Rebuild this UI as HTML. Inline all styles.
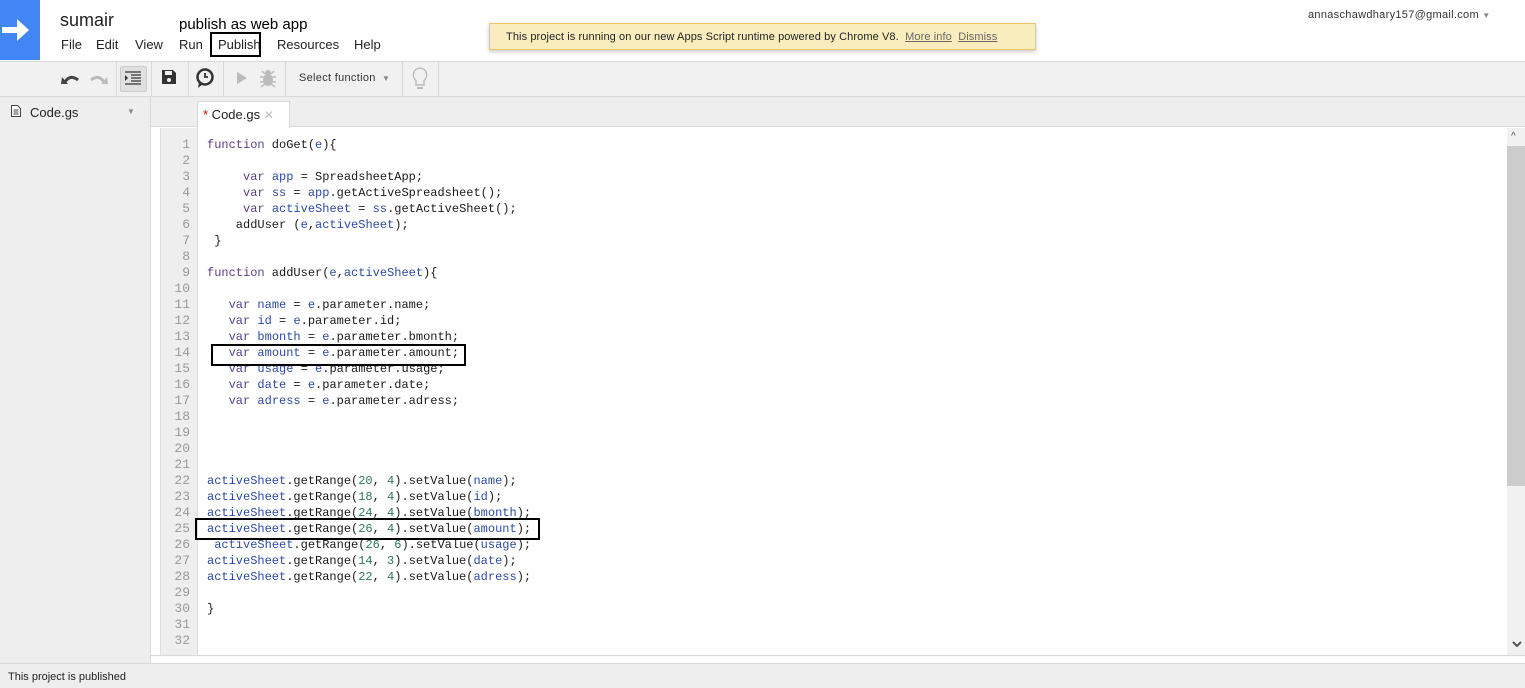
<!DOCTYPE html>
<html><head><meta charset="utf-8">
<style>
*{margin:0;padding:0;box-sizing:border-box}
body{width:1525px;height:688px;overflow:hidden;background:#fff;font-family:"Liberation Sans",Arial,sans-serif;position:relative}
.abs{position:absolute}
#logo{left:0;top:0;width:40px;height:60px;background:#4285f4}
.menu{top:37px;font-size:13px;color:#222}
#toolbar{left:0;top:61px;width:1525px;height:36px;background:#f1f1f1;border-top:1px solid #d9d9d9;border-bottom:1px solid #d9d9d9}
.sep{top:0;width:1px;height:35px;background:#d9d9d9}
#side{left:0;top:97px;width:151px;height:566px;background:#eee;border-right:1px solid #d9d9d9}
#tabbar{left:151px;top:97px;width:1374px;height:30px;background:#eee;border-bottom:1px solid #d9d9d9}
#gutter{left:160px;top:128px;width:38px;height:527px;background:#eee;border-left:1px solid #ddd;border-right:1px solid #ddd}
#code{left:160px;top:137px;font-family:"Liberation Mono",monospace;font-size:12px;line-height:16px;color:#1a1a1a;white-space:pre}
.ln{display:inline-block;width:30px;text-align:right;color:#999;margin-right:17px;font-size:13px;vertical-align:top}
.k{color:#5a3e8a}.v{color:#2d4aa6}.n{color:#2b7a54}
#status{left:0;top:663px;width:1525px;height:25px;background:#eee;border-top:1px solid #d9d9d9;font-size:11px;color:#222;padding:7px 8px}
.box{border:2px solid #000}
</style></head><body>
<div id="logo" class="abs"><svg width="40" height="60"><path d="M2 30h20" stroke="#fff" stroke-width="6"/><path d="M17 19l12 11-12 11z" fill="#fff"/></svg></div>
<div class="abs" style="left:60px;top:10px;font-size:18px;color:#222">sumair</div>
<div class="abs" style="left:179px;top:16px;font-size:15px;color:#000">publish as web app</div>
<div class="abs menu" style="left:61px">File</div>
<div class="abs menu" style="left:96px">Edit</div>
<div class="abs menu" style="left:135px">View</div>
<div class="abs menu" style="left:179px">Run</div>
<div class="abs menu" style="left:218px">Publish</div>
<div class="abs box" style="left:210px;top:32px;width:51px;height:25px"></div>
<div class="abs menu" style="left:277px">Resources</div>
<div class="abs menu" style="left:354px">Help</div>
<div class="abs" style="left:489px;top:23px;width:547px;height:27px;background:#f9edbe;border:1px solid #f0c36d;box-shadow:0 2px 4px rgba(0,0,0,.2);font-size:11px;color:#222;padding:7px 0 0 16px;letter-spacing:.1px">This project is running on our new Apps Script runtime powered by Chrome V8. &nbsp;<u style="color:#666">More info</u>&nbsp; <u style="color:#666">Dismiss</u></div>
<div class="abs" style="left:1308px;top:9px;font-size:11px;color:#333;letter-spacing:.3px">annaschawdhary157@gmail.com <span style="color:#888;font-size:8px">&#9660;</span></div>

<div id="toolbar" class="abs">
 <div class="abs sep" style="left:116px"></div><div class="abs sep" style="left:151px"></div><div class="abs sep" style="left:188px"></div><div class="abs sep" style="left:223px"></div><div class="abs sep" style="left:285px"></div><div class="abs sep" style="left:402px"></div><div class="abs sep" style="left:438px"></div>
 <svg class="abs" style="left:60px;top:8px" width="50" height="18"><path d="M5 12 q5-8 13-2" stroke="#444" stroke-width="3" fill="none"/><path d="M2 7l6 7-7 0z" fill="#444"/><path d="M44 12 q-5-8-13-2" stroke="#bbb" stroke-width="3" fill="none"/><path d="M47 7l-6 7 7 0z" fill="#bbb"/></svg>
 <div class="abs" style="left:120px;top:4px;width:27px;height:26px;background:#e0e0e0;border:1px solid #ccc;border-radius:2px"></div>
 <svg class="abs" style="left:125px;top:9px" width="16" height="14"><path d="M0 1h16M6 4h10M6 7h10M6 10h10M0 13h16" stroke="#333" stroke-width="1.3"/><path d="M0 4l3 3-3 3z" fill="#333"/></svg>
 <svg class="abs" style="left:161px;top:7px" width="16" height="16"><path d="M1 1h11l3 3v11H1z" fill="#333"/><rect x="4" y="2" width="7" height="4" fill="#f1f1f1"/><circle cx="8" cy="11" r="2" fill="#f1f1f1"/></svg>
 <svg class="abs" style="left:195px;top:6px" width="20" height="22"><circle cx="10" cy="9" r="7.5" fill="none" stroke="#333" stroke-width="2.5"/><path d="M10 5v4h3" stroke="#333" stroke-width="1.8" fill="none"/><path d="M4 14l-1 6 5-4z" fill="#333"/></svg>
 <svg class="abs" style="left:236px;top:9px" width="12" height="14"><path d="M1 1l10 6-10 6z" fill="#bbb"/></svg>
 <svg class="abs" style="left:259px;top:6px" width="18" height="20"><ellipse cx="9" cy="12" rx="5" ry="6" fill="#bbb"/><circle cx="9" cy="5" r="3" fill="#bbb"/><path d="M1 9h16M1 14h16M2 19l4-3M16 19l-4-3M3 3l3 3M15 3l-3 3" stroke="#bbb" stroke-width="1.5"/></svg>
 <div class="abs" style="left:299px;top:10px;font-size:11px;color:#333;letter-spacing:.3px">Select function <span style="color:#888;font-size:8px;margin-left:3px">&#9660;</span></div>
 <svg class="abs" style="left:411px;top:4px" width="18" height="26"><path d="M9 2a7 7 0 0 0-4 12.5V19h8v-4.5A7 7 0 0 0 9 2z" fill="none" stroke="#bbb" stroke-width="1.4"/><path d="M6 22h6" stroke="#bbb" stroke-width="2"/></svg>
</div>

<div id="side" class="abs">
 <svg class="abs" style="left:11px;top:8px" width="10" height="12"><path d="M.5.5h6l3 3v8H.5z" fill="#fff" stroke="#444"/><path d="M2.5 5h5M2.5 7h5M2.5 9h5" stroke="#444"/></svg>
 <div class="abs" style="left:30px;top:8px;font-size:13px;color:#222">Code.gs</div>
 <div class="abs" style="left:127px;top:10px;font-size:8px;color:#888">&#9660;</div>
</div>
<div id="tabbar" class="abs">
 <div class="abs" style="left:46px;top:4px;width:93px;height:27px;background:#fff;border:1px solid #d9d9d9;border-bottom:none"></div>
 <div class="abs" style="left:52px;top:10px;font-size:13px;color:#222"><span style="color:#d00">*</span> Code.gs <span style="color:#bbb;font-size:12px">&#10005;</span></div>
</div>
<div id="gutter" class="abs"></div>
<div id="code" class="abs"><span class="ln">1</span><span class="k">function</span> doGet(<span class="v">e</span>){
<span class="ln">2</span>
<span class="ln">3</span>     <span class="k">var</span> <span class="v">app</span> = SpreadsheetApp;
<span class="ln">4</span>     <span class="k">var</span> <span class="v">ss</span> = <span class="v">app</span>.getActiveSpreadsheet();
<span class="ln">5</span>     <span class="k">var</span> <span class="v">activeSheet</span> = <span class="v">ss</span>.getActiveSheet();
<span class="ln">6</span>    addUser (<span class="v">e</span>,<span class="v">activeSheet</span>);
<span class="ln">7</span> }
<span class="ln">8</span>
<span class="ln">9</span><span class="k">function</span> addUser(<span class="v">e</span>,<span class="v">activeSheet</span>){
<span class="ln">10</span>
<span class="ln">11</span>   <span class="k">var</span> <span class="v">name</span> = <span class="v">e</span>.parameter.name;
<span class="ln">12</span>   <span class="k">var</span> <span class="v">id</span> = <span class="v">e</span>.parameter.id;
<span class="ln">13</span>   <span class="k">var</span> <span class="v">bmonth</span> = <span class="v">e</span>.parameter.bmonth;
<span class="ln">14</span>   <span class="k">var</span> <span class="v">amount</span> = <span class="v">e</span>.parameter.amount;
<span class="ln">15</span>   <span class="k">var</span> <span class="v">usage</span> = <span class="v">e</span>.parameter.usage;
<span class="ln">16</span>   <span class="k">var</span> <span class="v">date</span> = <span class="v">e</span>.parameter.date;
<span class="ln">17</span>   <span class="k">var</span> <span class="v">adress</span> = <span class="v">e</span>.parameter.adress;
<span class="ln">18</span>
<span class="ln">19</span>
<span class="ln">20</span>
<span class="ln">21</span>
<span class="ln">22</span><span class="v">activeSheet</span>.getRange(<span class="n">20</span>, <span class="n">4</span>).setValue(<span class="v">name</span>);
<span class="ln">23</span><span class="v">activeSheet</span>.getRange(<span class="n">18</span>, <span class="n">4</span>).setValue(<span class="v">id</span>);
<span class="ln">24</span><span class="v">activeSheet</span>.getRange(<span class="n">24</span>, <span class="n">4</span>).setValue(<span class="v">bmonth</span>);
<span class="ln">25</span><span class="v">activeSheet</span>.getRange(<span class="n">26</span>, <span class="n">4</span>).setValue(<span class="v">amount</span>);
<span class="ln">26</span> <span class="v">activeSheet</span>.getRange(<span class="n">26</span>, <span class="n">6</span>).setValue(<span class="v">usage</span>);
<span class="ln">27</span><span class="v">activeSheet</span>.getRange(<span class="n">14</span>, <span class="n">3</span>).setValue(<span class="v">date</span>);
<span class="ln">28</span><span class="v">activeSheet</span>.getRange(<span class="n">22</span>, <span class="n">4</span>).setValue(<span class="v">adress</span>);
<span class="ln">29</span>
<span class="ln">30</span>}
<span class="ln">31</span>
<span class="ln">32</span></div>
<div class="abs box" style="left:211px;top:344px;width:255px;height:22px"></div>
<div class="abs box" style="left:195px;top:518px;width:345px;height:22px"></div>
<div class="abs" style="left:151px;top:655px;width:1374px;height:8px;background:#fff;border-top:1px solid #d9d9d9"></div>
<div class="abs" style="left:1507px;top:128px;width:18px;height:527px;background:#f1f1f1"></div>
<div class="abs" style="left:1507px;top:146px;width:18px;height:340px;background:#ccc"></div>
<div class="abs" style="left:1511px;top:131px;font-size:10px;color:#555">&#94;</div>
<svg class="abs" style="left:1512px;top:641px" width="10" height="8"><path d="M1 1l4 4 4-4" stroke="#555" stroke-width="2" fill="none"/></svg>
<div id="status" class="abs">This project is published</div>
</body></html>
